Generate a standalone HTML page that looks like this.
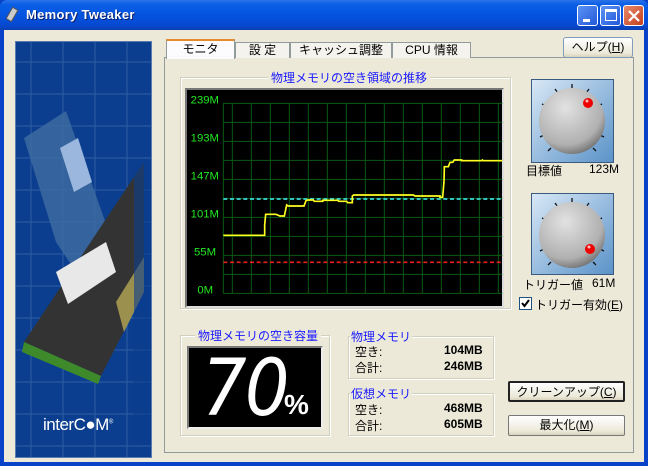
<!DOCTYPE html>
<html><head><meta charset="utf-8"><style>
*{margin:0;padding:0;box-sizing:border-box}
body{width:648px;height:466px;overflow:hidden;background:#0842c8;font-family:"Liberation Sans","Noto Sans CJK JP",sans-serif;font-size:12px;position:relative}
.abs{position:absolute}
#title{left:0;top:0;width:648px;height:30px;background:linear-gradient(#2c72e8 0%,#0a5fe6 15%,#0454e0 50%,#0848d0 85%,#0a3fb0 100%);border-radius:7px 7px 0 0}
#ttext{left:26px;top:7px;color:#fff;font-weight:bold;font-size:13px;text-shadow:1px 1px #0a1e6a;letter-spacing:.3px}
.tb{top:5px;width:21px;height:21px;border:1px solid #fff;border-radius:3px;background:linear-gradient(135deg,#5d93f5,#2359d8)}
#body{left:4px;top:30px;width:640px;height:432px;background:#ece9d8}
.lbl{color:#1a1aff;background:#ece9d8;padding:0 3px;font-size:12px}
.grp{border:1px solid #d0d0bf;box-shadow:inset 1px 1px #fff,1px 1px #fff}
.btn{background:linear-gradient(#fff,#ece9d8 80%,#d8d2bd);border:1px solid #003c74;border-radius:3px;text-align:center;font-size:12px;line-height:18px}
</style></head><body>
<div id="title" class="abs"></div>
<svg class="abs" style="left:6px;top:7px" width="16" height="16"><rect x="3" y="2" width="6" height="13" fill="#ccc" stroke="#555" transform="rotate(30 8 8)"/></svg>
<div id="ttext" class="abs">Memory Tweaker</div>
<div class="abs tb" style="left:577px"><div class="abs" style="left:5px;top:13px;width:7px;height:3px;background:#fff"></div></div>
<div class="abs tb" style="left:600px"><div class="abs" style="left:4px;top:3px;width:12px;height:12px;border:1px solid #fff;border-top-width:3px"></div></div>
<div class="abs tb" style="left:623px;background:linear-gradient(135deg,#e88a6c,#c4401c)"><svg class="abs" style="left:3px;top:3px" width="14" height="14"><path d="M2 2L12 12M12 2L2 12" stroke="#fff" stroke-width="2.2"/></svg></div>
<div id="body" class="abs"></div>

<!-- left image -->
<div class="abs" style="left:15px;top:41px;width:137px;height:417px;background:#0b3e8e;border:1px solid #5b7bb0;overflow:hidden">
<svg width="137" height="417">
<g stroke="#3a66ad" stroke-width="1" opacity=".8">
<path d="M15 0V417M47 0V417M79 0V417M111 0V417M0 20H137M0 52H137M0 84H137M0 116H137M0 148H137M0 180H137M0 212H137M0 244H137M0 276H137M0 308H137M0 340H137M0 372H137M0 404H137"/></g>
<polygon points="8,96 50,69 100,210 70,245 40,200" fill="#3d6aa0" opacity=".85"/>
<polygon points="44,106 62,96 76,140 58,150" fill="#9bb7de"/>
<polygon points="8,300 128,120 128,250 85,334" fill="#333"/>
<polygon points="8,300 85,334 82,342 6,310" fill="#3e8a2a"/>
<polygon points="40,230 90,200 100,230 52,262" fill="#e8e8e8"/>
<polygon points="100,260 128,215 128,250 108,290" fill="#c8b85a" opacity=".7"/>
<rect x="118" y="120" width="19" height="280" fill="#0b3e8e" opacity=".6"/>
</svg>
<div class="abs" style="left:27px;top:373px;color:#fff;font-size:17px;letter-spacing:-.5px">interC<span style="font-weight:bold">●</span>M<sup style="font-size:6px">®</sup></div>
</div>

<!-- tabs -->
<div class="abs" style="left:164px;top:57px;width:470px;height:396px;border:1px solid #919b9c;background:#ece9d8"></div>
<div class="abs" style="left:166px;top:39px;width:69px;height:20px;border:1px solid #919b9c;border-bottom:none;border-top:2px solid #e68b2c;background:#fcfcfe;text-align:center;font-size:12px;line-height:17px">モニタ</div>
<div class="abs" style="left:235px;top:42px;width:55px;height:16px;border:1px solid #919b9c;border-bottom:none;background:#f4f3ee;text-align:center;line-height:15px">設 定</div>
<div class="abs" style="left:290px;top:42px;width:102px;height:16px;border:1px solid #919b9c;border-bottom:none;background:#f4f3ee;text-align:center;line-height:15px">キャッシュ調整</div>
<div class="abs" style="left:392px;top:42px;width:79px;height:16px;border:1px solid #919b9c;border-bottom:none;background:#f4f3ee;text-align:center;line-height:15px">CPU 情報</div>
<div class="abs btn" style="left:563px;top:37px;width:70px;height:21px;border-color:#7f9db9">ヘルプ(<u>H</u>)</div>

<!-- graph group -->
<div class="abs grp" style="left:180px;top:77px;width:331px;height:232px"></div>
<div class="abs lbl" style="left:268px;top:69px">物理メモリの空き領域の推移</div>
<div class="abs" style="left:185px;top:88px;width:319px;height:220px;border:2px solid #777;border-right-color:#ddd;border-bottom-color:#ddd;background:#000"></div>
<svg class="abs" style="left:170px;top:80px" width="340" height="230" viewBox="0 0 1020 690">
<g stroke="#0b5a12" stroke-width="3" fill="none">
<path d="M160 70V640M187 70V640M244 70V640M301 70V640M358 70V640M415 70V640M472 70V640M529 70V640M586 70V640M643 70V640M700 70V640M757 70V640M814 70V640M871 70V640M928 70V640M985 70V640"/>
<path d="M160 70H997M160 127H997M160 184H997M160 241H997M160 298H997M160 355H997M160 412H997M160 469H997M160 526H997M160 583H997M160 640H997"/>
</g>
<g fill="#22e822" font-family="Liberation Sans" font-size="34">
<text x="62" y="70">239M</text><text x="62" y="184">193M</text><text x="62" y="299">147M</text><text x="62" y="413">101M</text><text x="72" y="527">55M</text><text x="82" y="641">0M</text></g>
<path d="M160 357H997" stroke="#3ad6d6" stroke-width="5" stroke-dasharray="12 8"/>
<path d="M160 547H997" stroke="#e82020" stroke-width="5" stroke-dasharray="12 8"/>
<path d="M160 466H284V435L287 403H318L330 408H343L350 375L355 378H402L408 362L413 360H430L433 364H458V361H503L507 364H530L533 368H547V348L551 345H730L735 348H810V352H818L822 305L823 260H835L840 247H848L853 240H875V242H935L937 240L940 242H997" stroke="#ffff20" stroke-width="5" fill="none"/>
</svg>

<!-- knobs -->
<svg class="abs" style="left:531px;top:79px" width="83" height="84">
<defs><linearGradient id="kb" x1="0" y1="0" x2="1" y2="1"><stop offset="0" stop-color="#d8e8f6"/><stop offset="1" stop-color="#5a92c8"/></linearGradient>
<radialGradient id="kn" cx=".4" cy=".3" r=".8"><stop offset="0" stop-color="#e2e2e2"/><stop offset=".7" stop-color="#b0b0b0"/><stop offset="1" stop-color="#5a5a5a"/></radialGradient></defs>
<rect x=".5" y=".5" width="82" height="83" fill="url(#kb)" stroke="#3a5a80"/>
<g stroke="#111" stroke-width="1.3"><path d="M41 5V10M24 10L27 14M58 10L55 14M11 25L15 27M71 25L67 27M8 41H12M74 41H70M9 58L13 56M73 58L69 56M17 72L20 69M65 72L62 69"/></g>
<circle cx="41" cy="42" r="33" fill="url(#kn)"/>
<circle cx="57" cy="24" r="5" fill="#e00"/><circle cx="56" cy="22" r="1.5" fill="#fbb"/>
</svg>
<div class="abs" style="left:526px;top:162px">目標値</div><div class="abs" style="left:589px;top:162px">123M</div>
<svg class="abs" style="left:531px;top:193px" width="83" height="82">
<rect x=".5" y=".5" width="82" height="81" fill="url(#kb)" stroke="#3a5a80"/>
<g stroke="#111" stroke-width="1.3"><path d="M41 5V10M24 10L27 14M58 10L55 14M11 25L15 27M71 25L67 27M8 41H12M74 41H70M9 58L13 56M73 58L69 56M17 72L20 69M65 72L62 69"/></g>
<circle cx="41" cy="42" r="33" fill="url(#kn)"/>
<circle cx="59" cy="56" r="5" fill="#e00"/><circle cx="58" cy="54" r="1.5" fill="#fbb"/>
</svg>
<div class="abs" style="left:523px;top:276px">トリガー値</div><div class="abs" style="left:592px;top:276px">61M</div>
<div class="abs" style="left:519px;top:297px;width:13px;height:13px;border:1px solid #1c5180;background:#fff"><svg width="11" height="11"><path d="M2 5L4.5 8L9 2" stroke="#000" stroke-width="2" fill="none"/></svg></div>
<div class="abs" style="left:535px;top:296px">トリガー有効(<u>E</u>)</div>

<!-- percent -->
<div class="abs grp" style="left:180px;top:335px;width:150px;height:101px"></div>
<div class="abs lbl" style="left:195px;top:327px">物理メモリの空き容量</div>
<div class="abs" style="left:187px;top:346px;width:136px;height:83px;border:2px solid #7a7a7a;border-right-color:#eee;border-bottom-color:#eee;background:#000"></div>
<div class="abs" style="left:202px;top:344px;color:#fff;font-size:78px;font-style:italic;letter-spacing:-2px;font-family:'DejaVu Sans',sans-serif;transform:scaleX(.9);transform-origin:left">70</div>
<div class="abs" style="left:284px;top:389px;color:#fff;font-size:28px;font-weight:bold">%</div>

<!-- memory groups -->
<div class="abs grp" style="left:348px;top:336px;width:146px;height:43px"></div>
<div class="abs lbl" style="left:350px;top:328px;padding:0 1px">物理メモリ</div>
<div class="abs" style="left:355px;top:343px">空き:</div><div class="abs" style="left:444px;top:343px;font-weight:bold">104MB</div>
<div class="abs" style="left:355px;top:359px">合計:</div><div class="abs" style="left:444px;top:359px;font-weight:bold">246MB</div>
<div class="abs grp" style="left:348px;top:393px;width:146px;height:43px"></div>
<div class="abs lbl" style="left:350px;top:385px;padding:0 1px">仮想メモリ</div>
<div class="abs" style="left:355px;top:401px">空き:</div><div class="abs" style="left:444px;top:401px;font-weight:bold">468MB</div>
<div class="abs" style="left:355px;top:417px">合計:</div><div class="abs" style="left:444px;top:417px;font-weight:bold">605MB</div>

<div class="abs btn" style="left:508px;top:381px;width:117px;height:21px;border:2px solid #222;border-radius:2px">クリーンアップ(<u>C</u>)</div>
<div class="abs btn" style="left:508px;top:415px;width:117px;height:21px;border-color:#777;border-radius:2px">最大化(<u>M</u>)</div>
</body></html>
